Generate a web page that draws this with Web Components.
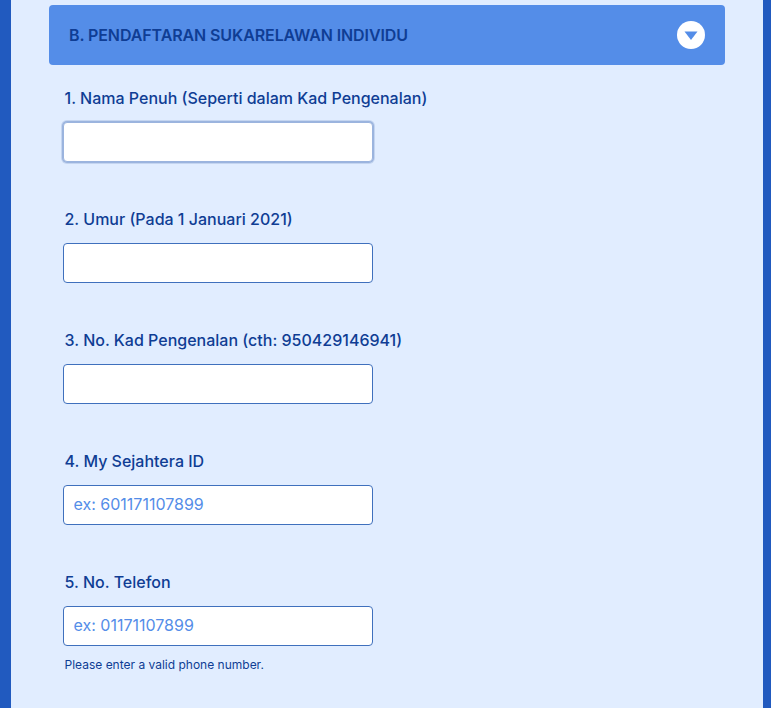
<!doctype html>
<html lang="en">
  <head>
    <meta charset="utf-8">
    <title>Pendaftaran Sukarelawan</title>
    <style>
      html, body { margin: 0; height: 100%; overflow: hidden; background: #215abf; }
      body { font-family: Inter, "Liberation Sans", sans-serif; }
    </style>
  </head>
  <body>
    <form-panel>
      <section-header>B. PENDAFTARAN SUKARELAWAN INDIVIDU</section-header>
      <form-field label="1. Nama Penuh (Seperti dalam Kad Pengenalan)" focused></form-field>
      <form-field label="2. Umur (Pada 1 Januari 2021)"></form-field>
      <form-field label="3. No. Kad Pengenalan (cth: 950429146941)"></form-field>
      <form-field label="4. My Sejahtera ID" placeholder="ex: 601171107899"></form-field>
      <form-field label="5. No. Telefon" placeholder="ex: 01171107899" hint="Please enter a valid phone number."></form-field>
    </form-panel>
    <script>
    class FormPanel extends HTMLElement {
      constructor() {
        super();
        this.attachShadow({mode: 'open'}).innerHTML = `
          <style>
            :host {
              display: flex;
              flex-direction: column;
              box-sizing: border-box;
              height: 708px;
              margin: 0 8px 0 11px;
              padding: 5px 38px 0 38px;
              background: #e1edff;
              overflow: hidden;
            }
          </style>
          <slot></slot>
        `;
      }
    }
    customElements.define('form-panel', FormPanel);

    class SectionHeader extends HTMLElement {
      constructor() {
        super();
        this.attachShadow({mode: 'open'}).innerHTML = `
          <style>
            :host {
              display: flex;
              align-items: center;
              justify-content: space-between;
              box-sizing: border-box;
              height: 60px;
              padding: 0 20px;
              margin-bottom: 24px;
              border-radius: 4px;
              background: #548de8;
              color: #0f3d94;
              font-size: 16px;
              font-weight: 600;
              letter-spacing: -0.1px;
            }
            .toggle {
              display: block;
              width: 28px;
              height: 28px;
            }
          </style>
          <slot></slot>
          <svg class="toggle" viewBox="0 0 28 28">
            <circle cx="14" cy="14" r="14" fill="#fff"/>
            <path d="M7.5 10.5h13L14 19z" fill="#548de8"/>
          </svg>
        `;
      }
    }
    customElements.define('section-header', SectionHeader);

    class FormField extends HTMLElement {
      constructor() {
        super();
        const root = this.attachShadow({mode: 'open'});
        root.innerHTML = `
          <style>
            :host {
              display: block;
              box-sizing: border-box;
              height: 121px;
              padding-left: 14px;
              color: #0f3d94;
            }
            label {
              display: block;
              height: 18px;
              line-height: 18px;
              margin: 0 0 15px 1.5px;
              font-size: 16px;
              font-weight: 500;
            }
            input {
              display: block;
              box-sizing: border-box;
              width: 310px;
              height: 40px;
              padding: 0 10px 2px 9.5px;
              border: 1px solid #3f70bd;
              border-radius: 4px;
              outline: none;
              background: #fff;
              font: 400 16px Inter, "Liberation Sans", sans-serif;
              color: #0f3d94;
            }
            input::placeholder { color: #548de8; opacity: 1; }
            :host([focused]) input {
              border-color: #9bb4de;
              box-shadow: 0 0 0 1px #9bb4de, 0 0 0 2px #c4d5f0;
            }
            .hint {
              margin: 12px 0 0 1.5px;
              font-size: 12px;
              line-height: 14px;
            }
          </style>
          <label></label>
          <input type="text">
          <div class="hint"></div>
        `;
        root.querySelector('label').textContent = this.getAttribute('label');
        root.querySelector('input').placeholder = this.getAttribute('placeholder') || '';
        const hintEl = root.querySelector('.hint');
        if (this.hasAttribute('hint')) {
          hintEl.textContent = this.getAttribute('hint');
        } else {
          hintEl.remove();
        }
      }
    }
    customElements.define('form-field', FormField);
    </script>
  </body>
</html>
